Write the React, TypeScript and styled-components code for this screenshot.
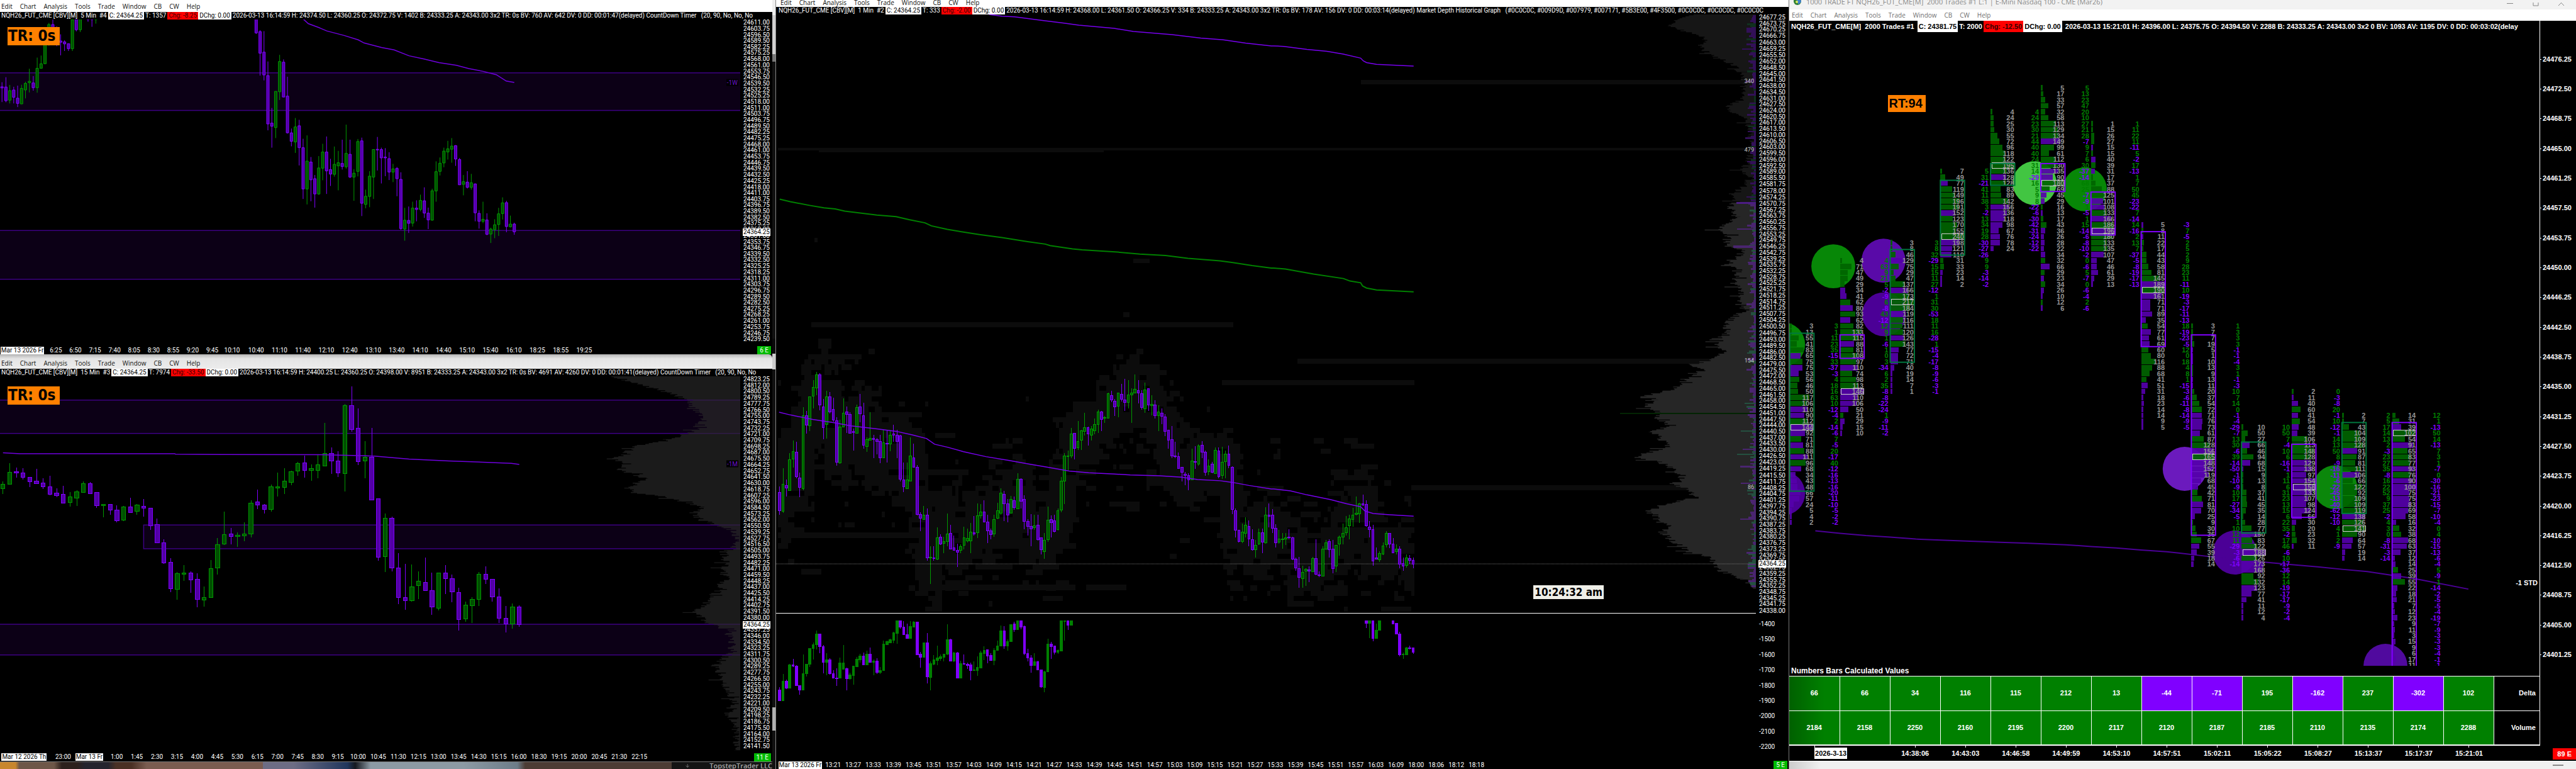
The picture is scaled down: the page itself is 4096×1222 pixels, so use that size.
import React from 'react';
import styled, { createGlobalStyle, css } from 'styled-components';

const CHART_FONT = 'Roboto, "Noto Sans", sans-serif';
const MENU_FONT = '"Open Sans", "Noto Sans", sans-serif';
const BOLD_FONT = '"Liberation Sans", Arial, sans-serif';
const BADGE_FONT = '"DejaVu Sans Condensed", "Noto Sans", sans-serif';

const GREEN = '#008000';
const PURPLE = '#8000ff';

/* ---------- data ---------- */

type Candle = { i: number; up: boolean; h: number; t: number; b: number; l: number };

// Each entry is colour + high,bodyTop,bodyBottom,low; "@n" jumps to bar n.
function parseCandles(src: string): Candle[] {
  const out: Candle[] = [];
  let i = 0;
  src.trim().split(/\s+/).forEach((tok) => {
    if (tok[0] === '@') {
      i = Number(tok.slice(1));
      return;
    }
    const [h, t, b, l] = tok.slice(1).split(',').map(Number);
    out.push({ i, up: tok[0] === 'G', h, t, b, l });
    i += 1;
  });
  return out;
}

const FIVE_MIN = parseCandles(`
P360,380,385,447 P338,381,441,448 G372,397,439,453 P380,394,426,453 P375,430,453,469 G371,387,455,456 G358,365,394,431
G301,356,362,405 P333,363,384,397 G252,299,384,406 G243,279,299,300 G160,180,279,280 G100,107,195,200 P80,107,120,170
P115,170,180,202 P150,179,185,242 P176,183,192,223 P190,191,213,223 G84,86,213,223 P84,84,130,137 G84,84,130,140
@22 P84,84,85,95 P84,84,85,117 G84,84,85,103
@65 P83,83,144,148 P132,138,233,331 P136,228,328,352 P269,331,543,571 P473,539,553,647 G400,400,559,605 G240,269,402,438
P260,272,425,426 P336,421,582,585 P563,582,619,641 G517,556,622,670 P525,551,647,725 P608,647,828,872 G593,706,828,896
P688,710,788,882 P767,783,850,910 G684,736,850,854 G630,666,737,790 P598,666,749,850 P696,743,763,815 G642,720,764,774
G661,713,727,834 P612,716,730,743 G546,672,731,739 P612,676,776,780 G742,759,776,880 G609,620,751,773 P603,617,891,947
G831,860,896,913 G750,772,861,908 G654,655,776,872 P600,654,657,747 P647,655,692,804 P649,688,692,772 P667,695,754,789
G718,740,754,798 P732,738,783,860 P755,786,1002,1007 G911,965,1004,1055 P905,966,979,1021 G884,912,978,993 P878,912,918,970
G853,878,918,926 P821,880,934,955 P910,934,964,1004 G827,836,965,967 G707,752,837,884 G690,715,751,769 G647,662,714,733
G617,652,666,699 G605,640,654,713 P636,638,697,727 P692,699,810,811 G767,796,808,856 P750,798,821,826 G762,801,821,831
P804,806,933,970 P922,935,970,1002 G884,961,970,978 P935,964,1027,1031 G998,1004,1026,1065 G961,985,1007,1044
G911,937,984,1034 G865,889,936,962 P880,888,993,1018 G945,982,994,997 P976,982,1016,1029`);

const FIFTEEN_MIN = parseCandles(`
G500,510,528,547 G433,467,511,512 P448,465,468,487 P450,468,486,492 P484,486,501,522 P454,500,509,510 P489,506,520,528
P479,520,547,551 P525,544,553,558 P516,548,580,582 G540,558,578,594 G533,539,562,591 G500,508,542,543 P503,509,545,547
P539,541,590,598 G583,585,590,633 P583,586,607,624 P588,606,645,651 G590,595,643,648 P560,595,615,616 G583,588,612,623
P566,592,600,632 P599,600,665,680 P637,660,727,728 P716,728,803,806 P785,801,899,912 G837,843,901,939 G810,839,845,868
P833,839,866,913 P840,864,937,967 G891,930,941,964 G793,824,930,932 G711,734,822,845 G611,697,733,735 P672,696,704,733
G690,699,704,742 G652,695,703,722 G569,580,696,708 P531,577,588,602 P584,587,605,620 G512,521,605,613 G467,521,525,555
G452,499,522,547 G460,464,503,515 G428,434,461,480 P404,432,458,487 G437,453,458,498 G399,437,458,489 G282,397,443,444
P375,396,424,473 P388,423,469,484 G212,219,470,538 P148,219,307,316 P228,302,427,440 G351,409,424,488 P301,409,569,570
P562,564,781,794 G620,636,780,836 P631,637,821,834 P767,822,932,956 P807,931,943,977 G809,891,943,945 G833,871,887,936
P782,874,905,906 P839,905,966,996 G840,841,970,978 P811,841,862,919 P846,862,911,948 P894,912,1013,1053
G946,958,1011,1021 G929,937,962,1026 G836,845,939,962 P815,844,864,880 P861,864,928,947 P896,928,1008,1025
P962,1008,1028,1060 G952,965,1028,1046 P961,965,1032,1039`);

const ONE_MIN = parseCandles(`
P428,452,526,543 G354,420,528,534 P401,425,434,469 G295,321,445,446 G242,287,319,353 P248,289,388,394 P373,395,432,472
G108,143,436,444 P125,143,181,214 G65,67,184,205 G-1,28,64,113 G-33,-23,31,60 P-27,-23,100,122 P75,107,190,238
G42,66,179,236 P48,66,127,133 P71,118,161,168 P150,163,331,345 G160,188,334,336 G73,132,188,190 P106,127,137,213
P130,138,213,214 P195,206,211,283 G99,109,213,214 P56,108,135,170 P92,143,263,275 G230,239,267,288 G128,233,242,243
P220,235,240,315 P234,240,248,299 P221,248,312,335 G198,253,312,313 P200,255,257,331 G203,221,256,287 P180,217,222,249
P200,222,247,314 P220,223,398,407 P333,402,430,450 G333,402,436,437 G230,304,406,407 P255,312,351,353 P342,352,542,545
P532,540,556,608 G506,543,562,563 P518,544,716,728 G668,713,716,820 P670,716,718,728 G593,634,722,724 P622,632,661,664
G630,650,657,697 G536,620,650,668 P583,616,680,682 P625,675,686,688 P658,686,692,752 G662,670,686,698 G590,636,666,682
G598,638,648,654 G574,613,648,698 P547,614,620,627 G496,546,614,636 G500,530,546,558 P484,530,571,573 P541,572,606,656
P597,608,622,641 G541,560,620,632 G493,527,555,560 G435,454,537,541 P446,461,499,567 P480,499,544,572 G466,480,535,537
P468,485,513,523 G376,399,517,518 P394,398,487,517 P463,481,569,600 P559,569,590,627 P540,590,600,669 G543,587,595,602
P542,584,643,645 P634,636,682,701 G616,645,691,719 G510,564,643,650 P545,560,573,633 P543,566,610,613 G517,525,603,605
G390,406,524,533 G295,304,406,498 G284,304,307,361 G193,217,304,313 P213,215,276,320 G164,246,271,281 G200,203,241,282
G131,190,206,222 P188,190,217,264 G185,197,222,243 G154,178,205,217 G119,127,178,213 P124,127,157,206 G143,151,153,172
G50,55,152,153 P44,62,80,89 P75,84,107,145 G50,51,105,150 P15,57,76,87 P-5,79,90,124 G-1,60,89,115 G33,51,60,172
G-24,37,51,52 P-1,41,51,93 P40,53,109,118 G9,39,116,132 P33,35,99,124 G60,96,102,141 P80,99,143,154 G102,127,144,204
P115,132,146,178 P137,147,206,226 P200,202,242,275 P185,240,304,313 P247,304,308,314 P292,307,355,356 P350,352,371,408
P371,378,384,424 P376,383,402,444 G277,325,402,404 P265,328,330,357 G259,264,337,344 P246,262,289,315 P284,289,371,384
G320,347,368,383 P328,338,371,375 G270,283,375,377 P271,285,389,395 G268,330,383,397 G284,297,328,394 P264,297,342,355
P346,350,521,540 P517,526,605,634 P603,604,650,653 G577,611,650,657 G552,584,616,634 P566,588,641,669 P600,643,684,686
G643,665,684,714 G597,614,659,664 P599,615,653,696 G511,543,655,658 P496,544,549,592 P520,544,596,617 P579,596,655,673
G602,640,652,659 G615,640,643,680 G617,636,640,664 P600,631,635,641 P630,634,721,726 P714,721,756,769 P712,758,795,837
G748,773,799,836 G757,762,769,829 P750,765,769,813 G711,719,772,773 P640,719,783,785 P770,784,788,794 G669,681,790,791
G644,656,681,683 P640,650,684,714 P643,681,758,779 G664,666,749,774 G627,633,659,707 G577,616,631,662 G547,594,615,625
G541,559,587,642 G515,544,560,590 G469,537,541,546 G495,497,538,574 P460,498,502,508 P484,500,587,590 P568,591,601,634
P583,603,729,748 P674,716,722,723 G690,699,724,732 G654,667,700,705 G607,618,663,675 P615,618,661,676 P635,660,695,698
G662,681,691,701 P668,681,740,757 P715,739,749,768 G701,717,747,754 P705,719,727,739 P714,726,740,758`);

const CUMULATIVE = parseCandles(`
P1237,1248,1290,1290 G1183,1213,1290,1290 P1207,1213,1240,1244 G1142,1147,1240,1240 P1122,1147,1152,1156
P1147,1151,1231,1231 P1228,1230,1247,1266 G1104,1181,1247,1247 G1142,1143,1182,1194 G1079,1080,1143,1155
G1055,1064,1080,1124 G1009,1023,1064,1084 P1022,1023,1074,1099 P1066,1072,1137,1181 G1099,1126,1137,1187
P1120,1126,1183,1186 P1168,1181,1200,1200 P1160,1199,1201,1232 G1118,1138,1200,1200 G1067,1138,1164,1166
P1157,1162,1202,1248 G1178,1187,1202,1206 G1149,1151,1189,1226 G1115,1124,1153,1153 G1102,1112,1126,1137
P1097,1112,1147,1147 G1090,1102,1147,1147 P1077,1102,1137,1137 G1124,1131,1137,1187 P1120,1131,1178,1183
G1155,1169,1178,1182 G1048,1062,1168,1169 G1048,1053,1064,1067 G1042,1045,1057,1058 G1013,1018,1048,1058
G969,969,1020,1061 P969,969,995,1000 P969,994,1025,1027 P980,1025,1039,1039 G969,991,1039,1040 G969,974,994,994
P973,974,1106,1107 P1095,1104,1117,1158 G1056,1057,1117,1117 P1018,1057,1195,1221 G1133,1142,1196,1250
G1106,1126,1143,1147 G1068,1118,1128,1147 G1105,1113,1120,1130 G1101,1103,1115,1133 G982,1045,1104,1106
P1040,1045,1131,1133 G1095,1097,1131,1134 P1095,1097,1200,1202 G1131,1142,1200,1202 P1105,1142,1144,1144
P1138,1143,1149,1162 P1137,1147,1168,1208 G1133,1167,1169,1169 G1112,1157,1168,1192 G1090,1099,1158,1160
G1072,1087,1101,1128 P1085,1086,1111,1140 P1099,1108,1129,1130 G1079,1087,1129,1147 G1048,1070,1088,1089
G989,1009,1071,1072 P990,1009,1070,1081 G1044,1052,1070,1090 G982,983,1052,1052 P973,982,1003,1014 G969,969,1003,1004
P969,969,993,1004 P987,992,1101,1108 P1082,1100,1119,1133 P1106,1118,1148,1178 G1100,1133,1148,1149
P1131,1133,1166,1167 P1165,1166,1236,1238 G1171,1175,1237,1257 G1041,1063,1175,1176 P1054,1063,1072,1122
P1068,1070,1095,1104 G1084,1088,1095,1103 G969,969,1090,1092 G969,969,970,1048 P969,969,986,1005 G969,969,987,988
@175 P969,969,978,998 G969,969,978,1039 P969,969,1039,1052 G980,1006,1039,1042 G969,969,1007,1007
@183 P969,969,981,981 P978,980,1022,1023 P1014,1021,1107,1113 G1098,1104,1106,1122 G1075,1077,1105,1106
P1070,1077,1080,1085 P1078,1079,1095,1102`);

type Pt = [number, number];
const pts = (s: string): Pt[] => s.trim().split(/\s+/).map((p) => p.split(',').map(Number) as Pt);
const line = (p: Pt[]) => p.map((q) => q.join(',')).join(' ');

function noise(seed: number) {
  let s = seed;
  return () => {
    s = (s * 1664525 + 1013904223) % 4294967296;
    return s / 4294967296;
  };
}

/* Jagged horizontal histogram that hugs the right edge of a chart. */
function profilePath(knots: Pt[], right: number, step: number, jitter: number, seed: number) {
  const rnd = noise(seed);
  let d = `M${right},${knots[0][0]}`;
  for (let k = 0; k < knots.length - 1; k += 1) {
    const [y0, x0] = knots[k];
    const [y1, x1] = knots[k + 1];
    for (let y = y0; y < y1; y += step) {
      const base = x0 + ((x1 - x0) * (y - y0)) / (y1 - y0);
      const spike = rnd() > 0.9 ? 2 : 0.7;
      const x = Math.min(right - 2, base - (rnd() - 0.4) * jitter * spike);
      d += `L${x.toFixed(1)},${y.toFixed(1)}L${x.toFixed(1)},${Math.min(y + step, y1).toFixed(1)}`;
    }
  }
  return `${d}L${right},${knots[knots.length - 1][0]}Z`;
}

/* ---------- shared styled parts ---------- */

const Global = createGlobalStyle`
  * { box-sizing: border-box; }
  body { margin: 0; background: #000; overflow-x: hidden; }
`;

const Desktop = styled.main`
  display: grid;
  grid-template-columns: 1228fr 6fr 1610fr 1252fr;
  height: 100vh;
  overflow: hidden;
  background: #000;
  color: #fff;
  font-family: ${CHART_FONT};
  font-size: 10px;
`;

const LeftStack = styled.div`
  display: grid;
  grid-template-rows: 563fr 647fr 12px;
  min-height: 0;
  min-width: 0;
`;

const Splitter = styled.div`
  border-right: 1px solid #888;
  background: linear-gradient(
    to bottom,
    #eee 0 2%, #d0d0d0 2% 7%, #777 7% 8%, #111 8% 44%, #0a0a0a 44% 46%, #ccc 46% 48%,
    #111 48% 92%, #b0b0b0 92% 95%, #111 95%
  );
`;

const Window = styled.section<{ $rows: string }>`
  display: grid;
  grid-template-rows: ${(p) => p.$rows};
  min-width: 0;
  min-height: 0;
  overflow: hidden;
`;

const MenuBar = styled.nav<{ $inset: number; $tone: 'white' | 'silver' | 'inactive' }>`
  display: flex;
  align-items: center;
  gap: 12px;
  padding-left: ${(p) => p.$inset}px;
  overflow: hidden;
  color: ${(p) => (p.$tone === 'inactive' ? '#707070' : '#111')};
  background: ${(p) => (p.$tone === 'silver' ? 'linear-gradient(#b4b4b4, #e4e4e4 30%, #ececec)' : '#fff')};
  ${(p) => p.$tone === 'silver' && css`
    border-radius: 0 6px 0 0;
    padding-top: 5px;
  `}
`;

const MenuButton = styled.button<{ $tight?: boolean }>`
  appearance: none;
  border: 0;
  padding: 0;
  background: none;
  color: inherit;
  font: 10px/${(p) => (p.$tight ? '8px' : '14px')} ${MENU_FONT};
  ${(p) => p.$tight && css`align-self: flex-start;`}
`;

const StatusLine = styled.div<{ $bold?: boolean; $inset?: number }>`
  display: flex;
  align-items: center;
  padding-left: ${(p) => p.$inset ?? 0}px;
  overflow: hidden;
  white-space: pre;
  font: ${(p) => (p.$bold ? `bold 11px/18px ${BOLD_FONT}` : `10px/12px ${CHART_FONT}`)};
`;

const Chip = styled.span<{ $kind?: 'value' | 'loss' }>`
  flex: none;
  padding: 0 2px;
  ${(p) => p.$kind === 'value' && css`background: #fff; color: #000;`}
  ${(p) => p.$kind === 'loss' && css`background: #f00; color: #300;`}
`;

const PlotRow = styled.div<{ $axis: number }>`
  display: grid;
  grid-template-columns: minmax(0, 1fr) ${(p) => p.$axis}px;
  min-height: 0;
`;

const Plot = styled.div`
  position: relative;
  min-width: 0;
  min-height: 0;
  overflow: hidden;
`;

const Drawing = styled.svg`
  display: block;
  width: 100%;
  height: 100%;
`;

const AxisColumn = styled.div<{ $rows: string }>`
  position: relative;
  display: grid;
  grid-template-rows: ${(p) => p.$rows};
  min-height: 0;
  padding-left: 5px;
`;

const AxisText = styled.span`
  min-height: 0;
  overflow: visible;
  white-space: nowrap;
  line-height: 10px;
`;

const PriceTag = styled.strong`
  position: absolute;
  left: 4px;
  padding: 0 1px;
  background: #fff;
  color: #000;
  font-weight: normal;
  line-height: 12px;
  transform: translateY(-50%);
`;

const TimeRow = styled.div<{ $cols: string; $drop: number }>`
  position: relative;
  display: grid;
  grid-template-columns: ${(p) => p.$cols};
  align-items: center;
  min-width: 0;
  padding-top: ${(p) => p.$drop}px;
  line-height: 12px;
`;

const TimeText = styled.span<{ $date?: boolean }>`
  min-width: 0;
  white-space: nowrap;
  ${(p) => p.$date && css`
    justify-self: start;
    min-width: max-content;
    padding: 0 1px;
    background: #fff;
    color: #000;
  `}
`;

const Feed = styled.span<{ $delayed?: boolean }>`
  position: absolute;
  right: 2px;
  bottom: 0;
  padding: 0 4px;
  background: #0b0;
  line-height: 13px;
  ${(p) => p.$delayed && css`
    right: 0;
    bottom: 2px;
    background: #f00;
    font: bold 11px/18px ${BOLD_FONT};
    padding: 0 7px;
  `}
`;

const Badge = styled.strong<{ $left: string; $top: string; $tone?: 'clock' | 'rate' }>`
  position: absolute;
  left: ${(p) => p.$left};
  top: ${(p) => p.$top};
  background: #ff8000;
  color: #000;
  white-space: nowrap;
  padding: 0 7px 0 1px;
  font: bold 24px/29px ${BADGE_FONT};
  ${(p) => p.$tone === 'clock' && css`
    background: #efefe8;
    font-size: 17px;
    line-height: 22px;
    padding: 0 2px;
  `}
  ${(p) => p.$tone === 'rate' && css`
    font: bold 20px/27px ${BOLD_FONT};
    padding: 0 5px 0 1px;
  `}
`;

const EdgeNote = styled.span<{ $top: string; $color?: string }>`
  position: absolute;
  right: 3px;
  top: ${(p) => p.$top};
  transform: translateY(-50%);
  color: ${(p) => p.$color ?? '#ccc'};
  ${(p) => p.$color && css`background: #000; padding: 0 1px;`}
  font-size: ${(p) => (p.$color ? 10 : 9)}px;
`;

/* ---------- shared components ---------- */

const MENU = ['Edit', 'Chart', 'Analysis', 'Tools', 'Trade', 'Window', 'CB', 'CW', 'Help'];

function Menu({ inset, tone, tight }: { inset: number; tone: 'white' | 'silver' | 'inactive'; tight?: boolean }) {
  return (
    <MenuBar $inset={inset} $tone={tone} aria-label="Chart menu">
      {MENU.map((m) => (
        <MenuButton key={m} type="button" $tight={tight}>{m}</MenuButton>
      ))}
    </MenuBar>
  );
}

type StatusProps = { lead: string; close: string; trades: string; chg: string; rest: string; bold?: boolean; inset?: number };

function Status({ lead, close, trades, chg, rest, bold, inset }: StatusProps) {
  return (
    <StatusLine $bold={bold} $inset={inset}>
      <Chip>{lead}</Chip>
      <Chip $kind="value">C: {close}</Chip>
      <Chip>T: {trades}</Chip>
      <Chip $kind="loss">Chg: {chg}</Chip>
      <Chip $kind="value">DChg: 0.00</Chip>
      <Chip>{rest}</Chip>
    </StatusLine>
  );
}

const tracks = (from: number, to: number, starts: number[]) =>
  [from, ...starts]
    .map((s, i) => `minmax(0, ${Math.max(0, (i < starts.length ? starts[i] : to) - s).toFixed(2)}fr)`)
    .join(' ');

function PriceAxis(props: { from: number; to: number; first: number; last: number; labels: number[]; half: number; tag?: number }) {
  const { from, to, first, last, labels, half, tag } = props;
  const hi = labels[0];
  const lo = labels[labels.length - 1];
  const starts = labels.map((v) => first + ((hi - v) / (hi - lo)) * (last - first) - half);
  return (
    <AxisColumn $rows={tracks(from, to, starts)}>
      <span />
      {labels.map((v) => (
        <AxisText key={v}>{Math.abs(v) > 20000 ? v.toFixed(2) : v}</AxisText>
      ))}
      {tag !== undefined && <PriceTag style={{ top: `${((tag - from) / (to - from)) * 100}%` }}>24364.25</PriceTag>}
    </AxisColumn>
  );
}

type Tick = { x: number; label: string; date?: boolean };

function TimeAxis({ width, ticks, feed, drop = 0 }: { width: number; ticks: Tick[]; feed: string; drop?: number }) {
  return (
    <TimeRow $cols={tracks(0, width, ticks.map((t) => t.x))} $drop={drop}>
      <span />
      {ticks.map((t) => (
        <TimeText key={t.label} $date={t.date}>{t.label}</TimeText>
      ))}
      <Feed>{feed}</Feed>
    </TimeRow>
  );
}

function Candles({ data, x0, pitch, body, solid }: { data: Candle[]; x0: number; pitch: number; body: number; solid?: boolean }) {
  return (
    <g shapeRendering="crispEdges">
      {data.map((c) => {
        const x = x0 + c.i * pitch;
        const edge = c.up ? (solid ? GREEN : '#009a00') : PURPLE;
        const fill = solid ? edge : c.up ? '#005000' : '#5200a6';
        return (
          <g key={c.i} stroke={edge} fill={fill} strokeWidth="1">
            <line x1={x} x2={x} y1={c.h} y2={c.l} vectorEffect="non-scaling-stroke" />
            <rect x={x - body / 2} width={body} y={c.t} height={Math.max(1, c.b - c.t)} vectorEffect="non-scaling-stroke" />
          </g>
        );
      })}
    </g>
  );
}

function Zone({ x, y, w, h }: { x: number; y: number; w: number; h: number }) {
  return <rect x={x} y={y} width={w} height={h} fill="#0c0016" stroke="#3c0082" strokeWidth="1.5" vectorEffect="non-scaling-stroke" />;
}

function Curve({ points, color, width = 1.5 }: { points: Pt[]; color: string; width?: number }) {
  return <polyline points={line(points)} fill="none" stroke={color} strokeWidth={width} vectorEffect="non-scaling-stroke" />;
}

const half = (label: string) => (label.length > 4 ? 15 : 12);

/* ---------- five-minute chart ---------- */

const FIVE_LABELS = [
  611, 603.75, 596.5, 589.5, 582.25, 575.25, 568, 561, 553.75, 546.5, 539.5, 532.25, 525.25, 518, 511, 503.75, 496.75, 489.5,
  482.25, 475.25, 468, 461, 453.75, 446.75, 439.5, 432.5, 425.25, 418, 411, 403.75, 396.75, 389.5, 382.5, 375.25, 368, 361,
  353.75, 346.75, 339.5, 332.5, 325.25, 318.25, 311, 303.75, 296.75, 289.5, 282.5, 275.25, 268.25, 261, 253.75, 246.75, 239.5,
].map((v) => v + 24000);

const FIVE_TICKS: Tick[] = [
  { x: 1, label: 'Mar 13 2026 Fr', date: true },
  ...['6:25', '6:50', '7:15', '7:40', '8:05', '8:30', '8:55', '9:20', '9:45', '10:10'].map((label, i) => ({
    x: 112 + i * 39.2 - half(label), label,
  })),
  ...['10:40', '11:10', '11:40', '12:10', '12:40', '13:10', '13:40', '14:10', '14:40', '15:10', '15:40', '16:10', '18:25', '18:55', '19:25'].map(
    (label, i) => ({ x: 513 + i * 47 - half(label), label }),
  ),
];

const FIVE_AVG = pts(`608,83 618,103 640,121 655,135 690,155 718,174 730,188 765,208 790,218 820,244 850,258 880,274 915,286
940,300 970,313 995,327 1015,355 1031,361`);

function FiveMinute() {
  return (
    <Window $rows="19px 12px minmax(0, 1fr) 16px">
      <Menu inset={2} tone="white" />
      <Status
        lead="NQH26_FUT_CME [CBV][M]  5 Min  #4" close="24364.25" trades="1357" chg="-8.25"
        rest="2026-03-13 16:14:59 H: 24374.50 L: 24360.25 O: 24372.75 V: 1402 B: 24333.25 A: 24343.00 3x2 TR: 0s BV: 760 AV: 642 DV: 0 DD: 00:01:47(delayed) CountDown Timer   (20, 90, No, No, No"
      />
      <PlotRow $axis={51}>
        <Plot>
          <Drawing viewBox="0 85 1484 1424" preserveAspectRatio="none" role="img" aria-label="Five minute candles">
            <Zone x={-2} y={319} w={1490} h={165} />
            <Zone x={-2} y={1010} w={1490} h={214} />
            <Candles data={FIVE_MIN} x0={4} pitch={7.84} body={5} />
            <Curve points={FIVE_AVG} color="#7000e0" />
          </Drawing>
          <Badge $left="12px" $top="12px">TR: 0s</Badge>
          <EdgeNote $top="19.4%" $color="#6a10c8">-1W</EdgeNote>
        </Plot>
        <PriceAxis from={85} to={1509} first={86} last={1487} labels={FIVE_LABELS} half={13} tag={1017} />
      </PlotRow>
      <TimeAxis width={1549} ticks={FIVE_TICKS} feed="6 E" drop={3} />
    </Window>
  );
}

/* ---------- fifteen-minute chart ---------- */

const FIFTEEN_LABELS = [
  823.25, 812, 800.5, 789.25, 777.75, 766.5, 755, 743.75, 732.25, 721, 709.75, 698.25, 687, 675.5, 664.25, 652.75, 641.5, 630,
  618.75, 607.25, 596, 584.5, 573.25, 562, 550.5, 539.25, 527.75, 516.5, 505, 493.75, 482.25, 471, 459.5, 448.25, 437, 425.5,
  414.25, 402.75, 391.5, 380, 368.75, 357.25, 346, 334.5, 323.25, 311.75, 300.5, 289.25, 277.75, 266.5, 255, 243.75, 232.25,
  221, 209.5, 198.25, 186.75, 175.5, 164, 152.75, 141.5,
].map((v) => v + 24000);

const FIFTEEN_TICKS: Tick[] = [
  { x: 3, label: 'Mar 12 2026 Th', date: true },
  { x: 111, label: '23:00' },
  { x: 151, label: 'Mar 13  Fr', date: true },
  ...['1:00', '1:45', '2:30', '3:15', '4:00', '4:45', '5:30', '6:15', '7:00', '7:45', '8:30', '9:15', '10:00', '10:45', '11:30',
    '12:15', '13:00', '13:45', '14:30', '15:15', '16:00', '18:30', '19:15', '20:00', '20:45', '21:30', '22:15'].map((label, i) => ({
    x: 234 + i * 40.3 - half(label), label,
  })),
];

const FIFTEEN_PROFILE = pts(`110,1235 125,1260 140,1290 155,1315 170,1345 185,1365 200,1385 225,1392 250,1405 270,1412 295,1400
318,1385 330,1365 345,1330 358,1300 370,1270 385,1262 400,1255 415,1225 430,1260 455,1245 470,1268 490,1300 505,1275 520,1268
540,1265 555,1330 575,1375 595,1412 615,1392 640,1405 655,1430 680,1465 720,1478 748,1470 760,1452 800,1458 830,1450 860,1460
880,1448 905,1440 930,1430 960,1410 985,1395 1010,1410 1030,1430 1050,1460 1090,1468 1130,1470 1150,1455 1180,1432 1200,1440
1250,1450 1270,1462 1320,1475 1370,1455 1390,1475 1440,1480 1498,1475`);

const FIFTEEN_AVG = pts(`6,394 40,397 350,397 352,399 445,400 640,401 720,404 750,406 820,417 900,424 1000,431 1025,433 1041,437`);

function FifteenMinute() {
  return (
    <Window $rows="23px 12px minmax(0, 1fr) 16px">
      <Menu inset={2} tone="silver" />
      <Status
        lead="NQH26_FUT_CME [CBV][M]  15 Min  #3" close="24364.25" trades="7974" chg="-33.50"
        rest="2026-03-13 16:14:59 H: 24400.25 L: 24360.25 O: 24398.00 V: 8951 B: 24333.25 A: 24343.00 3x2 TR: 0s BV: 4691 AV: 4260 DV: 0 DD: 00:01:41(delayed) CountDown Timer   (20, 90, No, No"
      />
      <PlotRow $axis={51}>
        <Plot>
          <Drawing viewBox="0 110 1484 1392" preserveAspectRatio="none" role="img" aria-label="Fifteen minute candles">
            <Zone x={-2} y={198} w={1490} h={124} />
            <Zone x={288} y={662} w={1200} h={88} />
            <Zone x={-2} y={1030} w={1490} h={114} />
            <path d={profilePath(FIFTEEN_PROFILE, 1484, 3.2, 26, 7)} fill="#2a2a2a" opacity="0.65" />
            <Candles data={FIFTEEN_MIN} x0={6} pitch={13.44} body={8} />
            <Curve points={FIFTEEN_AVG} color="#7000e0" />
          </Drawing>
          <Badge $left="12px" $top="16px">TR: 0s</Badge>
          <EdgeNote $top="23.4%" $color="#6a10c8">-1M</EdgeNote>
        </Plot>
        <PriceAxis from={110} to={1502} first={113} last={1482} labels={FIFTEEN_LABELS} half={11} tag={1032} />
      </PlotRow>
      <TimeAxis width={1549} ticks={FIFTEEN_TICKS} feed="11 E" drop={1} />
    </Window>
  );
}

const Wallpaper = styled.footer`
  display: grid;
  grid-template-columns: minmax(0, 1347fr) 202fr;
  border-top: 1px solid #777;
  background: linear-gradient(
    to right,
    #c8862c 0 2%, #6e5748 2.5% 7%, #2c201c 8% 10%, #24242e 11% 14%, #4a3024 15% 17%, #7a5c50 19% 34%, #6c6c84 34% 38%,
    #20365c 45%, #15181f 46%, #8c9aa4 48% 60%, #6c7c88 67%, #4c3c34 68% 100%
  );
`;

const TopstepBar = styled.div`
  grid-column: 2;
  display: flex;
  align-items: flex-start;
  gap: 32px;
  padding-left: 22px;
  overflow: hidden;
  background: #141414;
  color: #a8a8a8;
  font: 600 11px/11px ${MENU_FONT};
  white-space: nowrap;
`;

/* ---------- one-minute chart with market depth ---------- */

const ONE_LABELS = [
  677.25, 673.75, 670.25, 666.75, 663, 659.25, 655.5, 652, 648.5, 645, 641.5, 638, 634.5, 631, 627.5, 624, 620.5, 617, 613.5,
  610, 606.5, 603, 599.5, 596, 592.5, 589, 585.5, 581.75, 578, 574.25, 570.75, 567.25, 563.75, 560.25, 556.75, 553.25, 549.75,
  546.25, 542.75, 539.25, 535.75, 532.25, 528.75, 525.25, 521.75, 518.25, 514.75, 511.25, 507.75, 504.25, 500.5, 496.75, 493,
  489.5, 486, 482.5, 479, 475.5, 472, 468.5, 465, 461.5, 458, 454.5, 451, 447.5, 444, 440.5, 437, 433.5, 430, 426.5, 423,
  419.25, 415.5, 411.75, 408.25, 404.75, 401.25, 397.75, 394.25, 390.75, 387.25, 383.75, 380.25, 376.75, 373.25, 369.75,
  366.25, 362.75, 359.25, 355.75, 352.25, 348.75, 345.25, 341.75, 338,
].map((v) => v + 24000);

const SX = 1.742;
const SXR = 1.686;
const topY = (y: number) => y / 2.24;
const lowY = (y: number) => 680 + y / 2.253;
const joinPts = (a: string, b: string, fy: (y: number) => number): Pt[] => [
  ...pts(a).map(([x, y]) => [1380 + x / SX, fy(y)] as Pt),
  ...pts(b).map(([x, y]) => [2280 + x / SXR, fy(y)] as Pt),
];

const UPPER_BAND = joinPts(
  `680,58 720,65 760,68 850,83 910,92 960,101 1070,114 1130,126 1250,139 1340,153 1410,160 1480,173 1560,184`,
  `0,184 30,186 100,198 160,206 210,217 262,233 270,244 280,251 310,258 370,262 422,265`, topY);
const VWAP = joinPts(
  `27,798 60,808 120,823 165,833 200,837 230,846 330,862 390,868 430,880 480,893 500,905 550,919 600,930 650,940 720,952
   800,968 855,978 870,984 940,997 970,1001 1080,1010 1150,1018 1230,1024 1300,1035 1400,1045 1440,1052 1500,1064 1560,1074`,
  `0,1074 35,1078 120,1098 210,1116 230,1126 262,1133 268,1146 280,1154 310,1162 422,1169`, topY);
const LOWER_BAND = joinPts(
  `25,129 60,140 130,158 200,172 250,184 330,196 390,206 440,220 485,235 510,258 550,270 600,288 670,308 740,323 800,337
   860,350 930,366 990,373 1070,378 1120,382 1210,385 1280,391 1330,400 1400,405 1440,412 1490,424 1560,438`,
  `0,438 50,446 100,462 170,481 220,498 262,510 275,527 300,537 350,542 422,548`, lowY);

const DEPTH_TOP = pts(`58,1270 70,1240 85,1210 105,1200 122,1235 140,1290 160,1305 180,1290 210,1310 235,1350 260,1390 290,1410
330,1425 360,1425 400,1410 425,1370 450,1385 480,1430 520,1440 600,1445 640,1435 680,1412 710,1440 745,1420 775,1385 812,1390`)
  .map(([y, x]) => [topY(y), 2280 + x / SXR] as Pt);
const DEPTH_MAIN: Pt[] = [
  ...pts(`812,1390 830,1380 870,1395 900,1360 920,1345 940,1375 985,1365 1005,1425 1030,1395 1055,1365 1080,1405 1130,1390
  1170,1415 1200,1410 1240,1425 1270,1390 1300,1365 1330,1375 1360,1350 1378,1340 1410,1365 1440,1320 1460,1260 1480,1300
  1500,1270 1520,1240 1545,1220 1565,1190`).map(([y, x]) => [topY(y), 2280 + x / SXR] as Pt),
  ...pts(`42,1190 65,1110 80,1160 105,1130 130,1165 155,1160 180,1190 210,1145 240,1175 270,1190 295,1120 310,1100 330,1170
  350,1200 375,1215 400,1235 415,1205 435,1245 455,1260 470,1285 490,1210 510,1160 530,1130 550,1155 570,1165 590,1200
  610,1175 640,1200 665,1230 690,1260 710,1310 735,1330 750,1345 768,1350 785,1400 800,1415 815,1440 840,1452`)
    .map(([y, x]) => [lowY(y), 2280 + x / SXR] as Pt),
];

const ASK_BARS: [number, number, number, string][] = [
  [361.5, 3108, 3, '#4c1d84'], [409, 3109, 2, '#4a2570'], [439.5, 3102, 4, '#4a2570'], [738.5, 2900, 2, '#032403'],
  [770, 3116, 2, '#245040'], [812, 3109, 2, '#245040'], [833, 3115, 3, '#4a2570'], [803, 3119, 2, '#4a2570'],
  [863.5, 3116, 2, '#4a2570'], [927, 3115, 3, '#4a2570'], [86.5, 3118, 2, '#321058'], [50, 3126, 9, '#321058'],
];

const HEAT_ROWS: [number, number, number, number][] = [
  [1392, 265, 1751, 4], [1465, 269, 510, 4], [2436, 143, 707, 8], [1452, 576, 756, 9], [2187, 680, 345, 9],
  [2322, 642, 821, 9], [2526, 868, 617, 9], [1392, 952, 263, 10], [1644, 1046, 281, 10], [1944, 1046, 72, 10],
  [2028, 463, 30, 8], [1434, 1018, 36, 10], [1458, 425, 5, 8],
];

/* Resting-order cells; a roll is held for a few columns so that cells join into runs. */
function Heatmap() {
  const rnd = noise(41);
  const rolls: number[] = Array.from({ length: 60 }, () => rnd());
  const cells: string[] = [];
  ONE_MIN.forEach((c, k) => {
    const near = ONE_MIN.slice(Math.max(0, k - 3), k + 4);
    const hi = lowY(Math.min(...near.map((n) => n.h)));
    const lo = lowY(Math.max(...near.map((n) => n.l)));
    rolls.forEach((_, r) => {
      if (rnd() < 0.38) rolls[r] = rnd();
      const y = 530 + r * 9.4;
      if (y > 1086) return;
      const gap = y < hi ? hi - y : y > lo ? y - lo : 0;
      const chance = gap === 0 ? 0.95 : gap < 24 ? 0.78 : 0.9 * Math.exp(-gap / 34);
      if (rolls[r] < chance) cells.push(`M${1392 + c.i * 6},${y.toFixed(1)}h6v9.4h-6z`);
    });
  });
  return (
    <g fill="#0c0c0c" shapeRendering="crispEdges">
      <path d={cells.join('')} />
      {HEAT_ROWS.map(([x, y, w, h]) => (
        <rect key={`${x}-${y}`} x={x} y={y} width={w} height={h} />
      ))}
    </g>
  );
}

function DepthTicks() {
  const rnd = noise(99);
  const bars: React.ReactNode[] = [];
  for (let y = 27; y < 1050; y += 3) {
    const late = y > 361;
    const green = rnd() > 0.62;
    const len = 3 + rnd() * rnd() * 18;
    const color = green ? (late ? '#245040' : '#10301f') : late ? '#4a2570' : '#321058';
    bars.push(<rect key={y} x={3143 - len} y={y} width={len} height={3} fill={color} />);
  }
  return (
    <g shapeRendering="crispEdges">
      {bars}
      {ASK_BARS.map(([y, x, h, color]) => (
        <rect key={y} x={x} y={y} width={3143 - x} height={h} fill={color} />
      ))}
    </g>
  );
}

const toRef = (data: Candle[]) => data.map((c) => ({ ...c, h: lowY(c.h), t: lowY(c.t), b: lowY(c.b), l: lowY(c.l) }));
const ONE_REF = toRef(ONE_MIN);
const CUM_REF = toRef(CUMULATIVE);

const ONE_TICKS: Tick[] = [
  { x: 4, label: 'Mar 13 2026 Fr', date: true },
  ...Array.from({ length: 29 }, (_, i) => {
    const m = 13 * 60 + 21 + i * 6;
    return { x: 88 + i * 36, label: `${Math.floor(m / 60)}:${String(m % 60).padStart(2, '0')}` };
  }),
  ...['18:00', '18:06', '18:12', '18:18'].map((label, i) => ({ x: 88 + (29 + i) * 36, label })),
];

const SplitPlot = styled.div`
  display: grid;
  grid-template-rows: 950fr 236fr;
  min-height: 0;
`;

const DeltaPane = styled(PlotRow)`
  & > :first-child { border-top: 1px solid #fff; }
`;

function OneMinute() {
  return (
    <Window $rows="11px 12px minmax(0, 1fr) 12px">
      <Menu inset={7} tone="white" tight />
      <Status
        inset={2}
        lead="NQH26_FUT_CME [CBV][M]  1 Min  #2" close="24364.25" trades="333" chg="-2.00"
        rest="2026-03-13 16:14:59 H: 24368.00 L: 24361.50 O: 24366.25 V: 334 B: 24333.25 A: 24343.00 3x2 TR: 0s BV: 178 AV: 156 DV: 0 DD: 00:03:14(delayed) Market Depth Historical Graph   (#0C0C0C, #009D9D, #007979, #007171, #5B3E00, #4F3500, #0C0C0C, #0C0C0C, #0C0C0C"
      />
      <SplitPlot>
        <PlotRow $axis={52}>
          <Plot>
            <Drawing viewBox="1389 26 1754 1070" preserveAspectRatio="none" role="img" aria-label="One minute candles with market depth">
              <Heatmap />
              <path d={profilePath(DEPTH_TOP, 3143, 1.6, 18, 3)} fill="#161616" />
              <path d={profilePath(DEPTH_MAIN, 3143, 1.6, 24, 5)} fill="#262626" />
              <DepthTicks />
              <line x1="1389" x2="3143" y1="1008.5" y2="1008.5" stroke="#777" strokeDasharray="1 1" vectorEffect="non-scaling-stroke" />
              <Candles data={ONE_REF} x0={1395.5} pitch={6} body={4.2} />
              <Curve points={UPPER_BAND} color="#7800f0" />
              <Curve points={VWAP} color={GREEN} width={2} />
              <Curve points={LOWER_BAND} color="#7800f0" />
            </Drawing>
            <EdgeNote $top="11.2%">340</EdgeNote>
            <EdgeNote $top="22.6%">479</EdgeNote>
            <EdgeNote $top="57.8%">154</EdgeNote>
            <EdgeNote $top="79%">86</EdgeNote>
            <Badge $tone="clock" $left="77.3%" $top="95.4%">10:24:32 am</Badge>
          </Plot>
          <PriceAxis from={26} to={1096} first={27.2} last={1092.3} labels={ONE_LABELS} half={5.2} tag={1008.5} />
        </PlotRow>
        <DeltaPane $axis={52}>
          <Plot>
            <Drawing viewBox="1389 1097 1754 265" preserveAspectRatio="none" role="img" aria-label="Cumulative delta">
              <Candles data={CUM_REF} x0={1395.5} pitch={6} body={4} solid />
            </Drawing>
          </Plot>
          <PriceAxis
            from={1096} to={1362} first={1116} last={1336} half={5.2}
            labels={[-1400, -1500, -1600, -1700, -1800, -1900, -2000, -2100, -2200]}
          />
        </DeltaPane>
      </SplitPlot>
      <TimeAxis width={1813} ticks={ONE_TICKS} feed="5 E" />
    </Window>
  );
}

/* ---------- 2000-trade footprint ---------- */

type Bar = { start: number; vol: number[]; delta: number[] };
const nums = (s: string) => s.split(',').map(Number);

const BARS: Bar[] = [
  { start: 40, vol: nums('3,13,55,41,83,65,75,75,53,56,46,50,117,106,110,90,112,144,92,71,81,88,111,96,68,34,43,48,66,57,24,5,4,2'),
    delta: nums('3,1,11,23,35,-15,33,-37,-3,4,18,16,63,10,-12,-4,2,-14,-6,7,-5,20,-17,40,-12,-16,-13,-16,-20,-11,-10,-5,-2,-2') },
  { start: 29, vol: nums('4,71,47,49,29,34,41,62,80,93,62,82,133,115,88,81,108,97,110,74,98,113,146,110,106,50,21,29,15,10'),
    delta: nums('4,63,9,21,5,-2,-9,6,-8,43,-12,12,9,1,-6,1,0,3,-34,6,2,35,-8,-8,-22,-24,1,-9,-11,-2') },
  { start: 26, vol: nums('3,8,46,129,75,29,47,137,166,173,217,184,119,116,111,120,126,143,77,72,71,40,19,14,7,1'),
    delta: nums('3,8,32,-29,15,15,11,27,-12,1,31,30,-53,18,11,16,-28,1,-15,-4,-17,-8,-9,-6,-3,-1') },
  { start: 14, vol: nums('7,49,77,119,149,196,191,152,123,170,155,240,198,121,110,31,33,23,14,2'),
    delta: nums('5,31,-21,41,11,38,3,-2,13,34,19,28,-30,-27,-26,9,9,-3,-14,-2') },
  { start: 4, vol: nums('4,24,25,30,55,72,96,118,122,195,136,128,128,83,89,142,156,136,118,98,67,76,78,24'),
    delta: nums('4,24,23,30,21,44,40,40,24,31,14,-29,16,5,9,8,-22,-6,-30,-42,-31,-24,-12,-22') },
  { start: 0, vol: nums('5,17,33,57,32,58,113,129,134,149,99,61,112,130,135,90,180,69,45,29,16,13,17,43,36,26,28,22,34,32,66,29,23,34,26,10,12,6'),
    delta: nums('5,13,23,47,20,10,27,21,28,-7,9,7,6,30,-37,-14,68,25,-7,-9,1,-5,1,15,-14,-6,-8,-10,-2,0,-6,5,-7,0,-6,-4,2,-6') },
  { start: 6, vol: nums('1,15,26,27,15,15,40,39,31,17,37,88,125,101,108,133,166,186,196,180,133,135,107,47,46,61,29,13'),
    delta: nums('1,11,22,11,-11,5,-2,17,-13,1,7,50,45,-23,-22,7,-14,14,-16,2,13,7,-37,-5,-8,-19,-17,-13') },
  { start: 23, vol: nums('5,8,11,22,17,44,43,58,81,145,189,190,161,71,71,89,35,54,77,61,69,60,80,116,88,68,41,51,31,18,23,14,14,9,5'),
    delta: nums('-3,7,-5,2,5,2,9,28,23,11,-11,10,-19,-3,-17,-11,-13,18,-19,-23,-5,12,0,18,4,8,1,-15,-3,-6,-11,-8,-14,-9,-5') },
  { start: 40, vol: nums('3,7,7,19,5,1,10,13,9,13,11,20,37,54,72,71,76,73,61,87,128,156,165,148,152,119,68,45,42,71,81,70,25,9,30,36,67,55,39,18,14'),
    delta: nums('1,3,3,3,-1,-1,-4,3,1,-1,-3,10,7,14,0,-1,-4,-29,-7,13,30,-6,39,-14,-50,-1,-10,-9,10,17,-27,-34,-5,1,10,12,11,-29,-3,-6,-14') },
  { start: 57, vol: nums('10,50,27,66,46,94,68,15,9,13,8,37,41,45,35,14,28,77,150,83,122,188,126,173,168,92,132,123,77,41,11,12,4'),
    delta: nums('10,50,7,-4,10,6,-16,-1,1,11,6,31,23,13,15,6,22,35,-2,17,46,-6,10,-17,-36,12,14,-19,-17,-17,-9,-2,-4') },
  { start: 51, vol: nums('2,11,40,60,41,54,48,39,106,113,148,128,129,138,97,154,158,133,107,98,124,66,30,20,23,32,11'),
    delta: nums('0,-3,-8,20,-1,10,-12,-1,14,13,50,8,-9,-16,-11,-6,-22,-45,-13,-40,-62,-12,-10,4,1,2,-9') },
  { start: 55, vol: nums('2,7,43,104,109,128,91,87,81,111,106,66,122,92,109,109,119,138,126,141,90,64,57,19,14'),
    delta: nums('2,5,17,14,13,2,-3,23,27,35,-8,16,22,52,9,37,25,-2,4,3,0,-8,-31,-3,-14') },
  { start: 55, vol: nums('14,31,39,102,54,91,65,83,77,93,76,90,100,75,75,83,69,58,16,32,38,68,63,37,12,14,25,39,55,22,18,21,7,12,23,9,11,3,15,9,6,17,11'),
    delta: nums('12,1,-13,50,14,-13,7,3,1,-7,0,-30,-16,-21,-23,-15,-7,-10,-4,0,4,-10,-15,-13,-6,-4,5,-9,1,-14,-2,-5,-5,-4,-19,-7,-9,-3,-3,-3,-4,-1,-1') },
];

const K = 0.8883;
const fx = (x: number) => (x - 3202) * K;
const fy = (y: number) => y * K - 51;
const rowY = (k: number) => fy(157.6 + 10.665 * k);

const IMBALANCES: [number, number, number, boolean][] = [
  [0, 597, 880, true], [1, 600, 642, false], [2, 447, 649, true], [3, 323, 457, true], [4, 293, 332, true], [5, 293, 343, false],
  [6, 344, 421, false], [7, 415, 621, false], [8, 600, 959, false], [9, 792, 955, true], [10, 796, 927, false],
  [11, 757, 920, true], [12, 757, 1200, false],
];

const BUBBLES: [number, number, string][] = [
  [3191, 617, '#078707'], [3191, 884, '#4b0096'], [3281, 477, '#078707'], [3372, 563, '#4b0096'], [3371, 467, '#590aa8'],
  [3642, 328, '#42c542'], [3732, 339, '#078707'], [3911, 840, '#6b1abd'], [4001, 990, '#4b0096'], [4181, 873, '#0b870b'],
  [4271, 1193, '#500a9e'],
];

const STD_LINE: Pt[] = [
  ...pts(`128,611 225,621 325,630 420,636 520,644 618,648 715,652 850,657 960,661 1107,667 1205,674 1303,680 1400,688 1500,695`)
    .map(([x, y]) => [fx(3190 + x / 2.178), fy(680 + y / 2.253)] as Pt),
  ...pts(`0,700 100,712 345,738 448,747 550,756 646,766 746,775 850,791 940,805 1146,846`)
    .map(([x, y]) => [fx(3900 + x / 2.205), fy(680 + y / 2.253)] as Pt),
];

const BarText = styled.text<{ $fill: string }>`
  font: bold 11px ${BOLD_FONT};
  text-anchor: end;
  fill: ${(p) => p.$fill};
`;

function FootprintBar({ bar, index }: { bar: Bar; index: number }) {
  const left = fx(3203 + index * 90);
  const max = Math.max(...bar.vol);
  const full = 42.5 * K;
  return (
    <g>
      {bar.vol.map((v, k) => (
        <rect
          key={k} x={left} y={rowY(bar.start + k) - 4.5} height={8.7} width={Math.max(3, (v / max) * full)}
          fill={bar.delta[k] >= 0 ? '#006400' : '#5500aa'} opacity={0.92} shapeRendering="crispEdges"
        />
      ))}
      {bar.vol.map((v, k) => (
        <BarText key={k} $fill="#949494" x={left + 37.5} y={rowY(bar.start + k) + 4}>{v}</BarText>
      ))}
      {bar.delta.map((d, k) => (
        <BarText key={k} $fill={d >= 0 ? GREEN : PURPLE} x={left + 77} y={rowY(bar.start + k) + 4}>{d}</BarText>
      ))}
      <rect
        x={left + 2} y={rowY(bar.start + bar.vol.indexOf(max)) - 4.5} width={36} height={9}
        fill="none" stroke="#d0d0d0" shapeRendering="crispEdges"
      />
    </g>
  );
}

function Footprint() {
  return (
    <Drawing viewBox="0 0 1195 1008" preserveAspectRatio="xMinYMin meet" role="img" aria-label="Footprint of 2000-trade bars">
      {BUBBLES.map(([x, y, color]) => (
        <circle key={`${x}-${y}`} cx={fx(x)} cy={fy(y)} r={35} fill={color} />
      ))}
      <polyline points={line(STD_LINE)} fill="none" stroke="#4b0096" strokeWidth="2" />
      {BARS.map((bar, i) => (
        <FootprintBar key={i} bar={bar} index={i} />
      ))}
      {IMBALANCES.map(([i, y0, y1, up]) => (
        <rect
          key={i} x={fx(3203 + i * 90)} y={fy(y0)} width={38.5} height={(y1 - y0) * K}
          fill="none" stroke={up ? '#007840' : PURPLE} strokeWidth="2"
        />
      ))}
    </Drawing>
  );
}

const TitleBar = styled.header`
  display: flex;
  justify-content: space-between;
  padding: 0 17px 0 7px;
  overflow: hidden;
  background: #f2f2f2;
  color: #8a8a8a;
  font: 11px/6px ${MENU_FONT};
`;

const TitleGroup = styled.div<{ $gap: number }>`
  display: flex;
  gap: ${(p) => p.$gap}px;
  white-space: pre;
`;

const WindowButton = styled.button`
  appearance: none;
  border: 0;
  padding: 0;
  width: 12px;
  height: 8px;
  background: none;
  color: #888;
`;

const FootprintBody = styled.div`
  display: grid;
  grid-template-columns: minmax(0, 1fr) 57px;
  min-height: 0;
  font: bold 11px/13px ${BOLD_FONT};
`;

const FootprintMain = styled.div`
  display: grid;
  grid-template-rows: 18px minmax(0, 1fr) 16px 110px;
  min-width: 0;
  min-height: 0;
  border-right: 1px solid #fff;
  border-bottom: 1px solid #fff;
`;

const Scale = styled.div<{ $rows: string }>`
  display: grid;
  grid-template-rows: ${(p) => p.$rows};
  min-height: 0;
`;

const ScaleText = styled.span`
  display: flex;
  gap: 2px;
  min-height: 0;
  line-height: 12px;
  &::before {
    content: '';
    width: 2px;
    height: 1px;
    margin-top: 6px;
    background: #fff;
  }
`;

const TableCaption = styled.h2`
  margin: 0;
  padding-left: 3px;
  font: bold 12px/16px ${BOLD_FONT};
`;

const ValuesTable = styled.table`
  width: 100%;
  height: 100%;
  table-layout: fixed;
  border-collapse: collapse;
  text-align: center;
`;

const ValueCell = styled.td<{ $negative: boolean }>`
  padding: 0;
  border: 1px solid #fff;
  background: ${(p) => (p.$negative ? PURPLE : GREEN)};
  &:first-child {
    border-left: 0;
    background: linear-gradient(to right, #006000, #008000 70%);
  }
`;

const RowLabel = styled.th`
  width: 73px;
  padding: 0 6px 0 0;
  border-top: 1px solid #fff;
  border-bottom: 1px solid #fff;
  text-align: right;
`;

const LabelCol = styled.col`
  width: 73px;
`;

const FootprintTimes = styled.div`
  position: relative;
  display: grid;
  grid-template-columns: repeat(14, minmax(0, 1fr)) 130px;
  font: bold 11px/18px ${BOLD_FONT};
`;

const TimeCell = styled.span<{ $tick?: boolean }>`
  position: relative;
  padding-top: 3px;
  text-align: center;
  white-space: nowrap;
  ${(p) => p.$tick && css`
    background: linear-gradient(#fff, #fff) 50% 0 / 1px 3px no-repeat;
  `}
`;

const DateMark = styled.strong`
  display: inline-block;
  margin-left: 50%;
  padding: 0 1px;
  background: #fff;
  color: #000;
`;

const BottomStrip = styled.footer`
  display: flex;
  justify-content: flex-end;
  align-items: center;
  padding-right: 20px;
  border-top: 1px solid #fff;
  background: linear-gradient(to right, #ccc, #f0f0f0 4%);
`;

const Grip = styled.span`
  width: 17px;
  height: 2px;
  background: #888;
`;

const DELTAS = [66, 66, 34, 116, 115, 212, 13, -44, -71, 195, -162, 237, -302, 102];
const VOLUMES = [2184, 2158, 2250, 2160, 2195, 2200, 2117, 2120, 2187, 2185, 2110, 2135, 2174, 2288];
const BAR_TIMES = ['14:38:06', '14:43:03', '14:46:58', '14:49:59', '14:53:10', '14:57:51', '15:02:11', '15:05:22', '15:08:27',
  '15:13:37', '15:17:37', '15:21:01'];
const SCALE_LABELS = Array.from({ length: 21 }, (_, i) => 24476.25 - i * 3.75);
const SCALE_ROWS = tracks(37, 1335, SCALE_LABELS.map((_, i) => 104.6 + i * 53.32 - 6));

const Frame = styled(Window)`
  border-left: 1px solid #777;
`;

const StdLabel = styled.strong`
  color: #fff;
  font: bold 11px/13px ${BOLD_FONT};
`;

function TradeFootprint() {
  return (
    <Frame $rows="15px 18px minmax(0, 1fr) 24px 13px">
      <TitleBar>
        <TitleGroup $gap={7}>
          <svg width="13" height="9" viewBox="0 0 13 9" aria-hidden="true">
            <circle cx="6" cy="2" r="6" fill="#2f7d32" />
            <path d="M5 -3a6 6 0 0 1 7 6l-4 4-3-4z" fill="#3f7fd0" />
            <circle cx="5" cy="3" r="2" fill="#d8ec60" />
          </svg>
          <span>1000 TRADE FT NQH26_FUT_CME[M]  2000 Trades #1 L:1 | E-Mini Nasdaq 100 - CME (Mar26)</span>
        </TitleGroup>
        <TitleGroup $gap={29}>
          <WindowButton type="button" aria-label="Minimize">
            <svg width="12" height="8" viewBox="0 0 12 8"><path d="M1 1.5h10" stroke="currentColor" /></svg>
          </WindowButton>
          <WindowButton type="button" aria-label="Maximize">
            <svg width="12" height="8" viewBox="0 0 12 8"><path d="M2 -3.5v8.500h8v-8.500" fill="none" stroke="currentColor" /></svg>
          </WindowButton>
          <WindowButton type="button" aria-label="Close">
            <svg width="12" height="8" viewBox="0 0 12 8"><path d="M1 -4l9 9M10 -4l-9 9" stroke="currentColor" /></svg>
          </WindowButton>
        </TitleGroup>
      </TitleBar>
      <Menu inset={4} tone="inactive" />
      <FootprintBody>
        <FootprintMain>
          <Status
            bold inset={1} lead="NQH26_FUT_CME[M]  2000 Trades #1 " close="24381.75" trades="2000" chg="-12.50"
            rest=" 2026-03-13 15:21:01 H: 24396.00 L: 24375.75 O: 24394.50 V: 2288 B: 24333.25 A: 24343.00 3x2 0 BV: 1093 AV: 1195 DV: 0 DD: 00:03:02(delay"
          />
          <Plot>
            <Footprint />
            <Badge $tone="rate" $left="13.2%" $top="9.9%">RT:94</Badge>
            <EdgeNote $top="87%">
              <StdLabel>-1 STD</StdLabel>
            </EdgeNote>
          </Plot>
          <TableCaption>Numbers Bars Calculated Values</TableCaption>
          <ValuesTable>
            <colgroup>
              {DELTAS.map((_, i) => <col key={i} />)}
              <LabelCol />
            </colgroup>
            <tbody>
              <tr>
                {DELTAS.map((v, i) => <ValueCell key={i} $negative={v < 0}>{v}</ValueCell>)}
                <RowLabel scope="row">Delta</RowLabel>
              </tr>
              <tr>
                {VOLUMES.map((v, i) => <ValueCell key={i} $negative={false}>{v}</ValueCell>)}
                <RowLabel scope="row">Volume</RowLabel>
              </tr>
            </tbody>
          </ValuesTable>
        </FootprintMain>
        <Scale $rows={SCALE_ROWS}>
          <span />
          {SCALE_LABELS.map((v) => <ScaleText key={v}>{v.toFixed(2)}</ScaleText>)}
        </Scale>
      </FootprintBody>
      <FootprintTimes>
        <TimeCell $tick><DateMark>2026-3-13</DateMark></TimeCell>
        <TimeCell />
        {BAR_TIMES.map((t) => <TimeCell key={t} $tick>{t}</TimeCell>)}
        <Feed $delayed>89 E</Feed>
      </FootprintTimes>
      <BottomStrip><Grip /></BottomStrip>
    </Frame>
  );
}

export default function App() {
  return (
    <Desktop>
      <Global />
      <LeftStack>
        <FiveMinute />
        <FifteenMinute />
        <Wallpaper>
          <TopstepBar>
            <svg width="14" height="12" viewBox="0 0 14 12" aria-hidden="true">
              <path d="M7 0v11M1 5l6 6 6-6" fill="none" stroke="#999" strokeWidth="1.5" />
            </svg>
            <span>TopstepTrader LLC</span>
          </TopstepBar>
        </Wallpaper>
      </LeftStack>
      <Splitter />
      <OneMinute />
      <TradeFootprint />
    </Desktop>
  );
}
